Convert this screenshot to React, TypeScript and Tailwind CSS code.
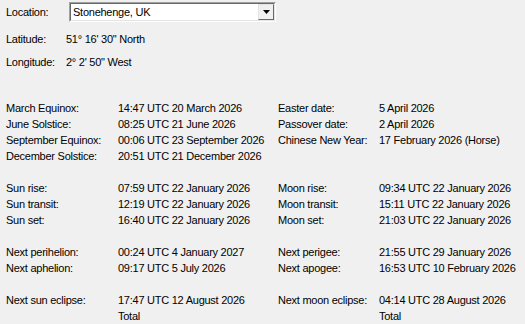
const font = { fontFamily: '"Liberation Sans", Arial, sans-serif' };

type Pair = [string, string];

function Row({ left, right }: { left?: Pair | [string, string, string]; right?: Pair }) {
  return (
    <div className="flex h-4 leading-4 whitespace-nowrap">
      <div className="w-[112px] shrink-0">{left ? left[0] : ""}</div>
      <div className="w-[160px] shrink-0">{left ? left[1] : ""}</div>
      <div className="w-[101px] shrink-0">{right ? right[0] : ""}</div>
      <div className="shrink-0">{right ? right[1] : ""}</div>
    </div>
  );
}

function Blank() {
  return <div className="h-4" />;
}

export default function App() {
  return (
    <div
      className="w-[525px] h-[324px] overflow-hidden bg-[#f0f0f0] text-black text-[11px] tracking-[-0.25px] pl-[6px]"
      style={font}
    >
      {/* Location combo */}
      <div className="flex items-center h-5 mt-[2px] leading-4">
        <div className="w-[63px] shrink-0">Location:</div>
        <div className="w-[207px] h-5 border border-t-[#a0a0a0] border-l-[#a0a0a0] border-b-white border-r-white">
          <div className="h-full flex bg-white border border-t-[#696969] border-l-[#696969] border-b-[#e3e3e3] border-r-[#e3e3e3]">
            <div className="flex-1 pl-[2px] leading-4">Stonehenge, UK</div>
            <div className="w-4 h-4 bg-[#f0f0f0] border border-t-[#e3e3e3] border-l-[#e3e3e3] border-b-[#696969] border-r-[#696969] flex items-center justify-center">
              <svg width="7" height="4" viewBox="0 0 7 4">
                <path d="M0 0h7L3.5 4z" fill="#000" />
              </svg>
            </div>
          </div>
        </div>
      </div>

      <div className="flex h-4 leading-4 mt-[9px]">
        <div className="w-[60px] shrink-0">Latitude:</div>
        <div>51° 16' 30" North</div>
      </div>
      <div className="flex h-4 leading-4 mt-[7px]">
        <div className="w-[60px] shrink-0">Longitude:</div>
        <div>2° 2' 50" West</div>
      </div>

      <div className="mt-[30px]">
        <Row left={["March Equinox:", "14:47 UTC 20 March 2026"]} right={["Easter date:", "5 April 2026"]} />
        <Row left={["June Solstice:", "08:25 UTC 21 June 2026"]} right={["Passover date:", "2 April 2026"]} />
        <Row
          left={["September Equinox:", "00:06 UTC 23 September 2026"]}
          right={["Chinese New Year:", "17 February 2026 (Horse)"]}
        />
        <Row left={["December Solstice:", "20:51 UTC 21 December 2026"]} />
        <Blank />
        <Row left={["Sun rise:", "07:59 UTC 22 January 2026"]} right={["Moon rise:", "09:34 UTC 22 January 2026"]} />
        <Row left={["Sun transit:", "12:19 UTC 22 January 2026"]} right={["Moon transit:", "15:11 UTC 22 January 2026"]} />
        <Row left={["Sun set:", "16:40 UTC 22 January 2026"]} right={["Moon set:", "21:03 UTC 22 January 2026"]} />
        <Blank />
        <Row left={["Next perihelion:", "00:24 UTC 4 January 2027"]} right={["Next perigee:", "21:55 UTC 29 January 2026"]} />
        <Row left={["Next aphelion:", "09:17 UTC 5 July 2026"]} right={["Next apogee:", "16:53 UTC 10 February 2026"]} />
        <Blank />
        <Row left={["Next sun eclipse:", "17:47 UTC 12 August 2026"]} right={["Next moon eclipse:", "04:14 UTC 28 August 2026"]} />
        <Row left={["", "Total"]} right={["", "Total"]} />
      </div>
    </div>
  );
}
